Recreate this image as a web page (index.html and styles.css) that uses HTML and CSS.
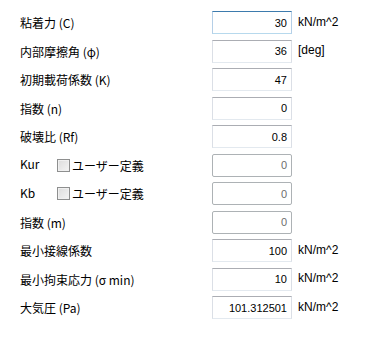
FILE: index.html
```html
<!DOCTYPE html>
<html>
<head>
<meta charset="UTF-8">
<title>土質パラメータ</title>
<link rel="stylesheet" href="styles.css">
</head>
<body>
<div class="form">
  <div class="label">粘着力 (C)</div>
  <div class="field focus">30</div>
  <div class="unit">kN/m^2</div>

  <div class="label">内部摩擦角 (φ)</div>
  <div class="field">36</div>
  <div class="unit">[deg]</div>

  <div class="label">初期載荷係数 (K)</div>
  <div class="field">47</div>
  <div class="unit"></div>

  <div class="label">指数 (n)</div>
  <div class="field">0</div>
  <div class="unit"></div>

  <div class="label">破壊比 (Rf)</div>
  <div class="field">0.8</div>
  <div class="unit"></div>

  <div class="label check-row"><span class="key">Kur</span><span class="box"></span><span>ユーザー定義</span></div>
  <div class="field disabled">0</div>
  <div class="unit"></div>

  <div class="label check-row"><span class="key">Kb</span><span class="box"></span><span>ユーザー定義</span></div>
  <div class="field disabled">0</div>
  <div class="unit"></div>

  <div class="label">指数 (m)</div>
  <div class="field disabled">0</div>
  <div class="unit"></div>

  <div class="label">最小接線係数</div>
  <div class="field">100</div>
  <div class="unit">kN/m^2</div>

  <div class="label">最小拘束応力 (σ min)</div>
  <div class="field">10</div>
  <div class="unit">kN/m^2</div>

  <div class="label">大気圧 (Pa)</div>
  <div class="field">101.312501</div>
  <div class="unit">kN/m^2</div>
</div>
</body>
</html>
```

FILE: styles.css
```css
body {
	margin: 0;
	background-color: #fff;
	font-family: "Noto Sans CJK JP", "Liberation Sans", sans-serif;
	font-size: 12px;
	color: #000;
}

.form {
	display: grid;
	grid-template-columns: 192px 80px auto;
	grid-auto-rows: 23px;
	row-gap: 5.5px;
	padding: 11px 0 0 20px;
}

.label {
	display: flex;
	align-items: center;
	white-space: nowrap;
}

.check-row .key {
	width: 37px;
	margin-top: -3px;
}

.box {
	width: 11px;
	height: 11px;
	border: 1px solid #8e8f8f;
	background: linear-gradient(135deg, #dcdcdc, #f4f4f4);
	box-shadow: inset 0 0 0 1px #f0f0f0;
	margin-right: 2px;
}

.field {
	box-sizing: border-box;
	width: 80px;
	height: 23px;
	display: flex;
	align-items: center;
	justify-content: flex-end;
	padding-right: 4px;
	border: 1px solid #dbdfe6;
	border-top-color: #abadb3;
	border-bottom-color: #e3e9ef;
	font-family: "Liberation Sans", sans-serif;
	font-size: 11px;
}

.focus {
	border-color: #b5cfe7;
	border-top-color: #3d7bad;
	border-bottom-color: #b7d9ed;
}

.disabled {
	border-color: #adb2b5;
	border-radius: 2px;
	color: #6d6d6d;
}

.unit {
	display: flex;
	align-items: center;
	padding-left: 6px;
	font-family: "Liberation Sans", sans-serif;
	margin-top: -2px;
}
```
